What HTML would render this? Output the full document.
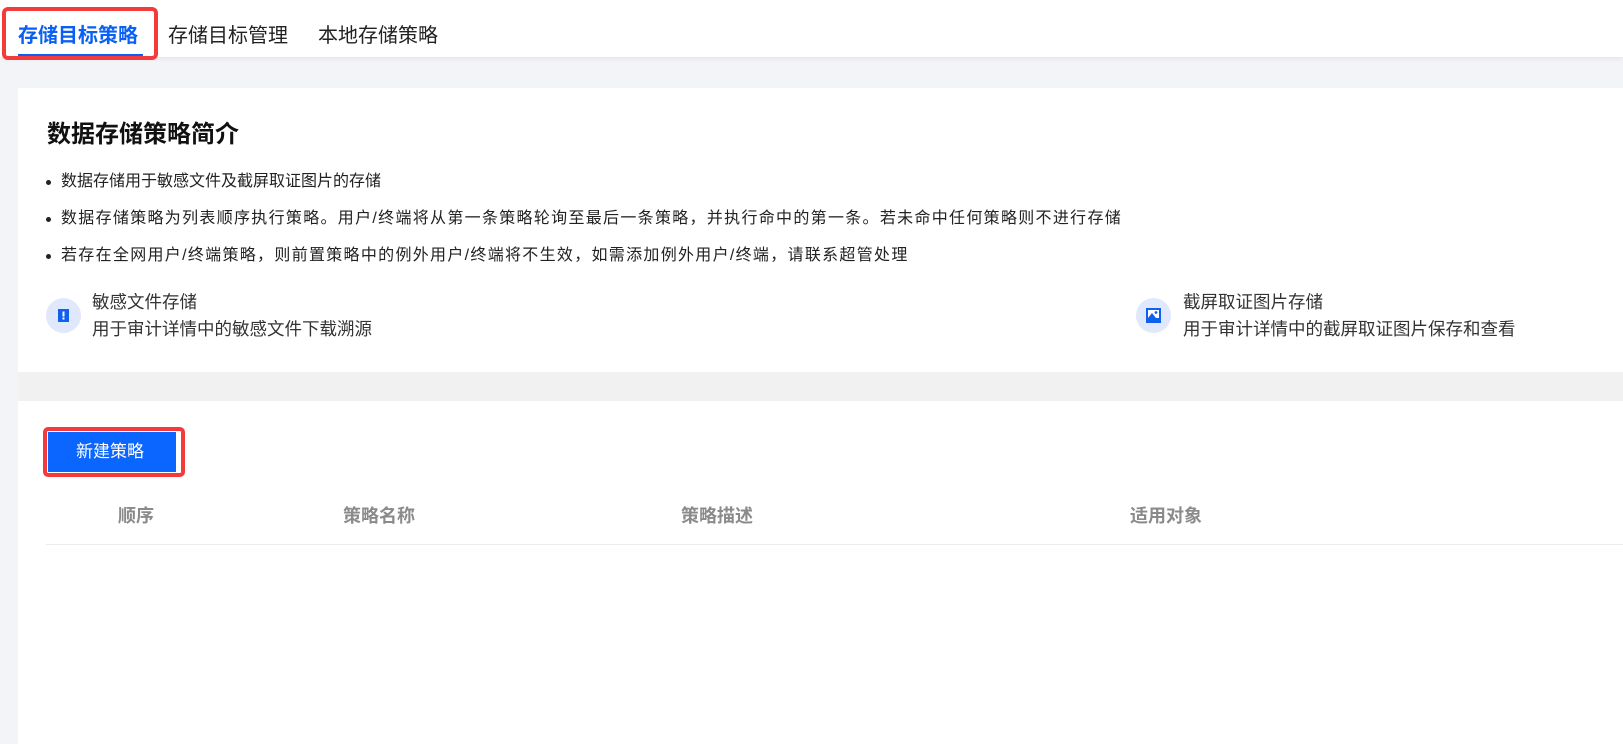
<!DOCTYPE html>
<html><head><meta charset="utf-8"><style>
*{margin:0;padding:0;box-sizing:border-box}
body{width:1623px;height:744px;overflow:hidden;background:#f3f4f7;font-family:"Liberation Sans","Noto Sans CJK SC",sans-serif;position:relative;color:#222}
.top{position:absolute;left:0;top:0;width:1623px;height:57px;background:#fff;box-shadow:0 2px 4px rgba(0,0,0,.06)}
.tab{position:absolute;top:21px;font-size:20px;color:#222;line-height:30px}
.abs{position:absolute}
.card1{position:absolute;left:18px;top:88px;width:1605px;height:284px;background:#fff}
.band{position:absolute;left:18px;top:372px;width:1605px;height:29px;background:#f1f1f1}
.card2{position:absolute;left:18px;top:401px;width:1605px;height:343px;background:#fff}
.b{position:absolute;left:46px;font-size:16px;color:#222;line-height:22px;white-space:nowrap}
.b:before{content:"";position:absolute;left:0;top:9px;width:5px;height:5px;border-radius:50%;background:#222}
.b span{margin-left:15px}
.ic{position:absolute;width:35px;height:35px;border-radius:50%;background:#dfe8fc}
.t{position:absolute;font-size:17.5px;color:#333;line-height:22px}
.th{position:absolute;top:505px;font-size:18px;color:#8a8a8a;font-weight:bold;line-height:22px}
</style></head><body>
<div class="top"></div>
<div class="abs" style="left:2px;top:7px;width:156px;height:53px;border:4px solid #f43b3b;border-radius:6px"></div>
<div class="tab" style="left:18px;color:#0a60f5;font-weight:bold">存储目标策略</div>
<div class="abs" style="left:18px;top:54px;width:125px;height:2px;background:#0a60f5"></div>
<div class="tab" style="left:168px">存储目标管理</div>
<div class="tab" style="left:318px">本地存储策略</div>

<div class="card1"></div>
<div class="band"></div>
<div class="card2"></div>

<div class="abs" style="left:47px;top:120px;font-size:24px;font-weight:bold;color:#111;line-height:30px">数据存储策略简介</div>
<div class="b" style="top:171px"><span>数据存储用于敏感文件及截屏取证图片的存储</span></div>
<div class="b" style="top:208px;letter-spacing:1.3px"><span>数据存储策略为列表顺序执行策略。用户/终端将从第一条策略轮询至最后一条策略，并执行命中的第一条。若未命中任何策略则不进行存储</span></div>
<div class="b" style="top:245px;letter-spacing:1.3px"><span>若存在全网用户/终端策略，则前置策略中的例外用户/终端将不生效，如需添加例外用户/终端，请联系超管处理</span></div>

<div class="ic" style="left:46px;top:298px"><svg width="35" height="35"><rect x="12" y="11" width="11" height="13" fill="#1060f0"/><rect x="16.5" y="13.5" width="2" height="5" fill="#fff"/><rect x="16.5" y="19.5" width="2" height="2" fill="#fff"/></svg></div>
<div class="t" style="left:92px;top:291px">敏感文件存储</div>
<div class="t" style="left:92px;top:318px">用于审计详情中的敏感文件下载溯源</div>

<div class="ic" style="left:1136px;top:298px"><svg width="35" height="35"><rect x="10" y="10" width="15" height="15" fill="#1060f0"/><rect x="12" y="12" width="11" height="8" fill="#fff"/><path d="M12 20 L16 15 L20 20 Z" fill="#1060f0"/><circle cx="20" cy="14.5" r="1.4" fill="#1060f0"/></svg></div>
<div class="t" style="left:1183px;top:291px">截屏取证图片存储</div>
<div class="t" style="left:1183px;top:318px">用于审计详情中的截屏取证图片保存和查看</div>

<div class="abs" style="left:43px;top:427px;width:142px;height:50px;border:4px solid #f43b3b;border-radius:5px"></div>
<div class="abs" style="left:48px;top:432px;width:128px;height:40px;background:#0a66ff;color:#fff;font-size:17px;line-height:40px;padding-left:28px">新建策略</div>

<div class="th" style="left:118px">顺序</div>
<div class="th" style="left:343px">策略名称</div>
<div class="th" style="left:681px">策略描述</div>
<div class="th" style="left:1130px">适用对象</div>
<div class="abs" style="left:46px;top:544px;width:1577px;height:1px;background:#ececec"></div>
</body></html>
